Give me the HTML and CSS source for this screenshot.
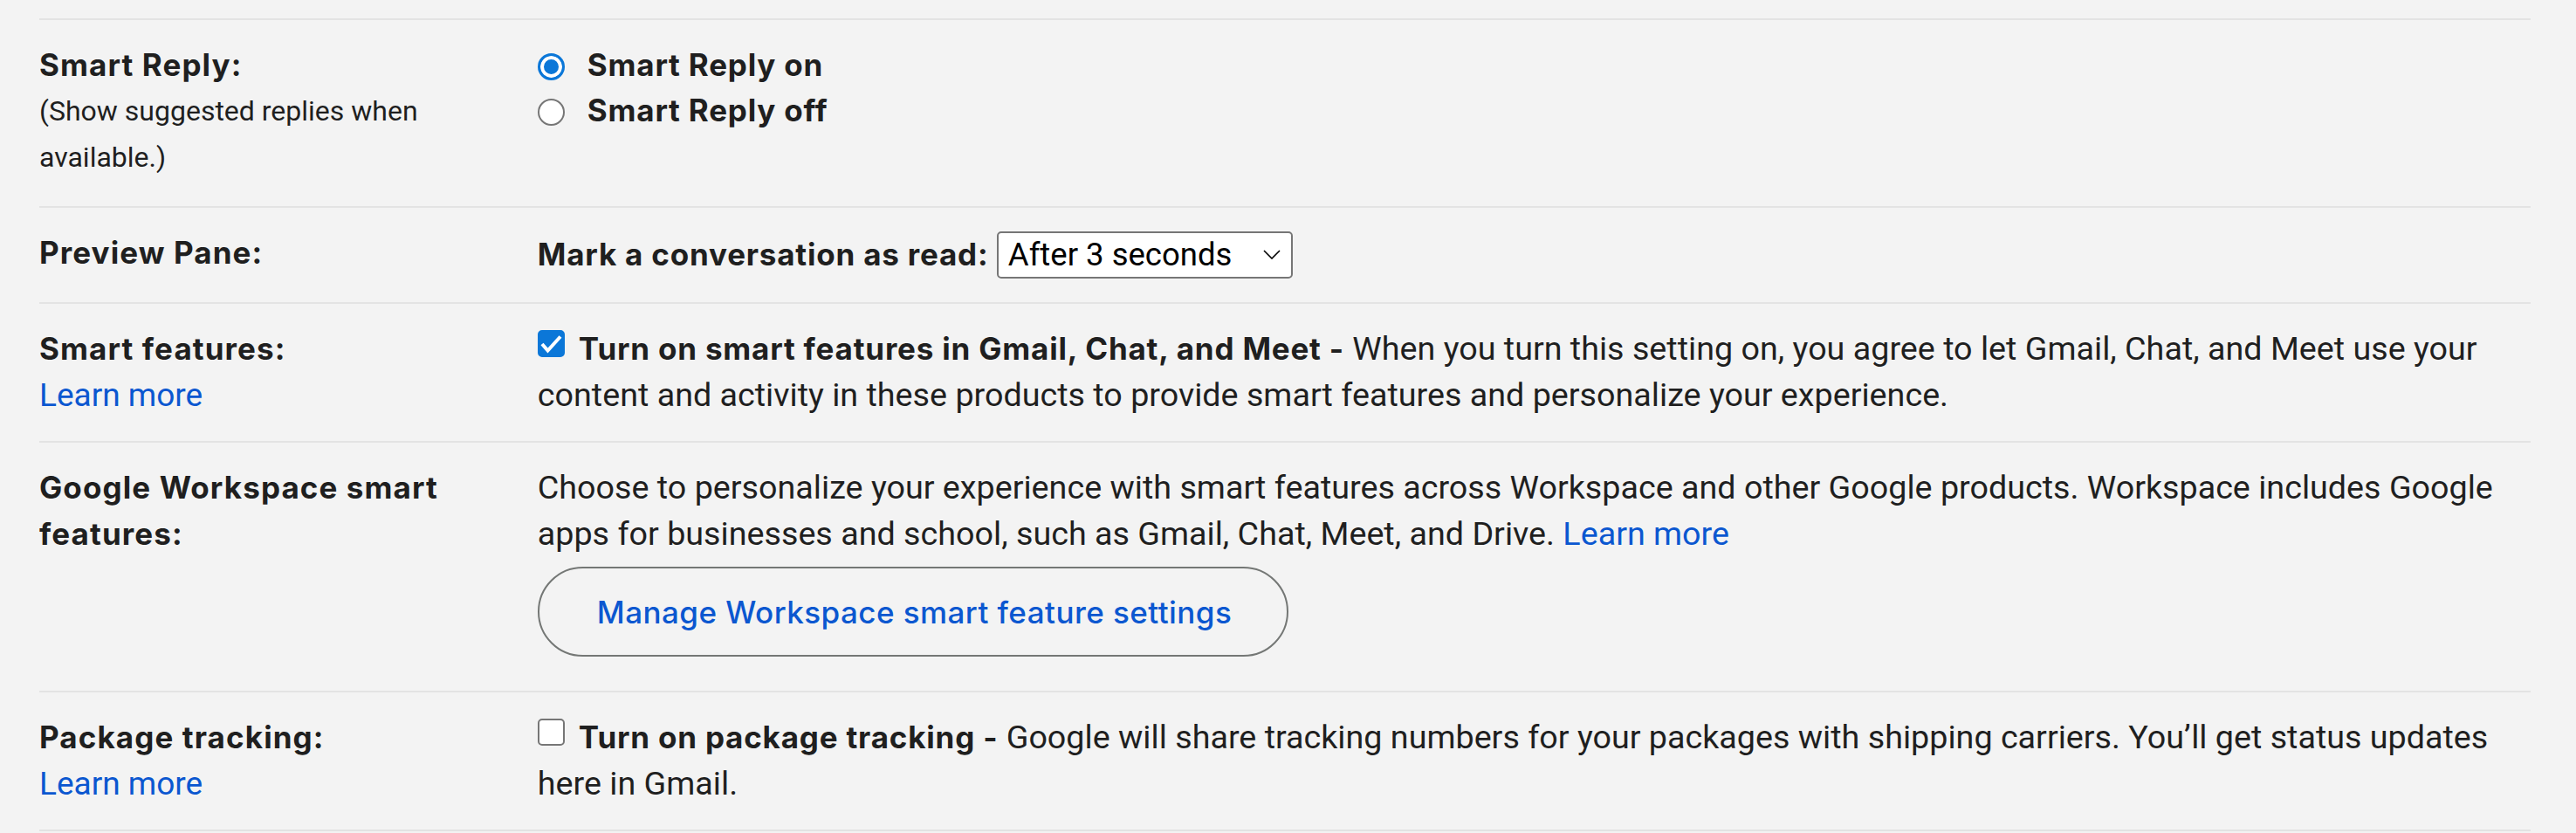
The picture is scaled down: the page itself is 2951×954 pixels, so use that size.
FILE: index.html
```html
<!DOCTYPE html>
<html lang="en">
<head>
<meta charset="utf-8">
<title>Settings</title>
<link rel="stylesheet" href="styles.css">
</head>
<body>
<div class="settings">
  <div class="row">
    <div class="label">
      <div class="title">Smart Reply:</div>
      <div class="note">(Show suggested replies when available.)</div>
    </div>
    <div class="value">
      <label class="opt"><input type="radio" name="sr" class="radio" checked><span class="strong">Smart Reply on</span></label>
      <label class="opt"><input type="radio" name="sr" class="radio"><span class="strong">Smart Reply off</span></label>
    </div>
  </div>

  <div class="row">
    <div class="label">
      <div class="title">Preview Pane:</div>
    </div>
    <div class="value">
      <span class="strong">Mark a conversation as read:</span> <span class="select"><span class="select-text">After 3 seconds</span><svg class="chev" width="20" height="11" viewBox="0 0 20 11"><polyline points="1,1 10,10 19,1" fill="none" stroke="#000" stroke-width="1.6"/></svg></span>
    </div>
  </div>

  <div class="row">
    <div class="label">
      <div class="title">Smart features:</div>
      <a class="link" href="#">Learn more</a>
    </div>
    <div class="value">
      <p class="text"><span class="cb checked"><svg width="31" height="31" viewBox="0 0 31 31"><polyline points="5,16 11.5,23.5 26,7.5" fill="none" stroke="#fff" stroke-width="4"/></svg></span><span class="strong">Turn on smart features in Gmail, Chat, and Meet -</span> When you turn this setting on, you agree to let Gmail, Chat, and Meet use your content and activity in these products to provide smart features and personalize your experience.</p>
    </div>
  </div>

  <div class="row">
    <div class="label">
      <div class="title">Google Workspace smart features:</div>
    </div>
    <div class="value">
      <p class="text">Choose to personalize your experience with smart features across Workspace and other Google products. Workspace includes Google apps for businesses and school, such as Gmail, Chat, Meet, and Drive. <a class="link" href="#">Learn more</a></p>
      <button class="pill" type="button">Manage Workspace smart feature settings</button>
    </div>
  </div>

  <div class="row">
    <div class="label">
      <div class="title">Package tracking:</div>
      <a class="link" href="#">Learn more</a>
    </div>
    <div class="value">
      <p class="text"><span class="cb"></span><span class="strong">Turn on package tracking -</span> Google will share tracking numbers for your packages with shipping carriers. You’ll get status updates here in Gmail.</p>
    </div>
  </div>
</div>
</body>
</html>
```
FILE: styles.css
```css
* { box-sizing: border-box; }

body {
  margin: 0;
  background: #f3f3f3;
  color: #1f1f1f;
  font-family: Roboto, "Noto Sans", sans-serif;
  font-size: 37.7px;
  line-height: 53px;
}

.settings {
  margin: 21px 52px 0 45px;
  border-top: 2px solid #e3e3e3;
}

.row {
  display: grid;
  grid-template-columns: 20% 1fr;
  padding: 25px 0 26px;
  border-bottom: 2px solid #e3e3e3;
}

.label {
  padding-right: 20px;
}

.title,
.strong {
  font-family: Inter, "Open Sans", sans-serif;
  font-weight: 700;
  font-size: 35px;
  letter-spacing: 0.8px;
  color: #1f1f1f;
}

.title {
  letter-spacing: 1.1px;
}

.note {
  font-size: 32px;
  line-height: 53px;
  padding-bottom: 3px;
}

.link {
  color: #0b57d0;
  text-decoration: none;
}

.label .link {
  font-size: 37px;
}

.value {
  min-width: 0;
}

.text {
  margin: 0;
}

.opt {
  display: block;
  line-height: 52px;
}

.radio {
  appearance: none;
  -webkit-appearance: none;
  width: 31px;
  height: 31px;
  margin: 0 26px 0 0;
  border: 2px solid #767676;
  border-radius: 50%;
  background: #fff;
  vertical-align: -5px;
}

.radio:checked {
  border: 3px solid #0b77d8;
  background: #0b77d8;
  box-shadow: inset 0 0 0 4px #fff;
}

.cb {
  display: inline-block;
  width: 31px;
  height: 31px;
  margin-right: 16px;
  border: 2px solid #767676;
  border-radius: 5px;
  background: #fff;
  vertical-align: 3px;
  position: relative;
}

.cb.checked {
  border-color: #0b77d8;
  background: #0b77d8;
}

.cb svg {
  position: absolute;
  left: -2px;
  top: -2px;
}

.select {
  display: inline-flex;
  align-items: center;
  justify-content: space-between;
  width: 339px;
  height: 54px;
  margin: 1.5px 0;
  padding: 0 12px 0 11px;
  border: 2px solid #767676;
  border-radius: 5px;
  background: #fff;
  color: #000;
  font-size: 36.5px;
  vertical-align: baseline;
}

.select-text {
  line-height: 50px;
}

.chev {
  display: block;
}

.pill {
  display: block;
  height: 103px;
  margin: 11px 0 13px;
  padding: 0 63px 0 66px;
  border: 2px solid #747775;
  border-radius: 52px;
  background: transparent;
  color: #0b57d0;
  font-family: Inter, "Open Sans", sans-serif;
  font-weight: 500;
  font-size: 35px;
  letter-spacing: 0.45px;
}
```
